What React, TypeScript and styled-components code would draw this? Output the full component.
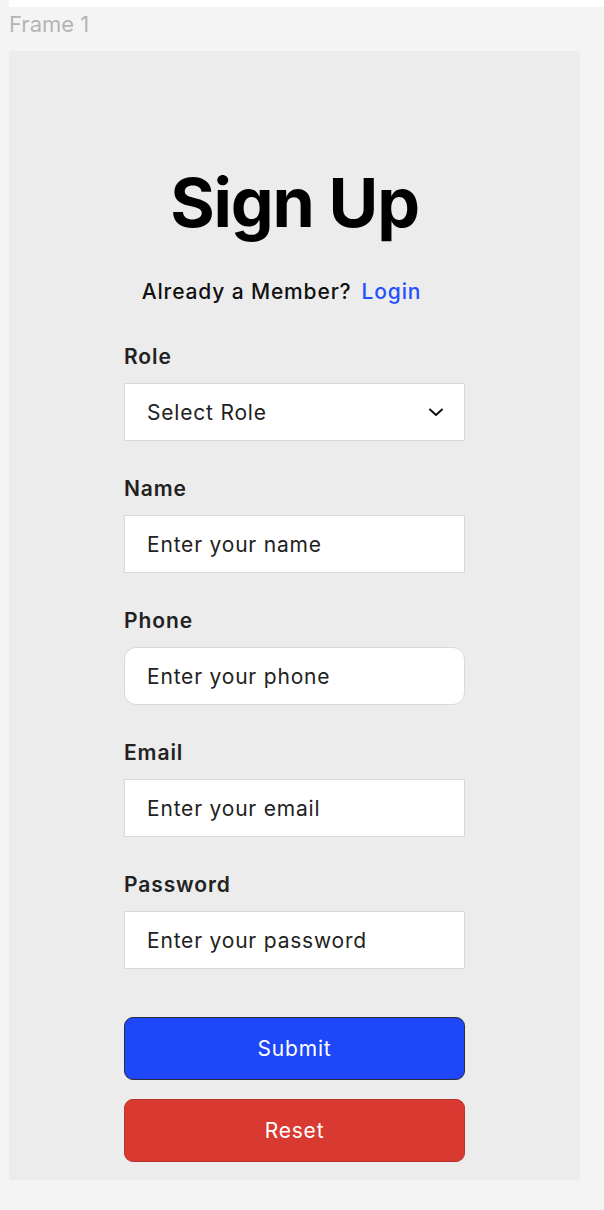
import React from "react";
import styled, { createGlobalStyle } from "styled-components";

const Global = createGlobalStyle`
  html, body { margin: 0; padding: 0; background: #f4f4f4; }
  body { font-family: Inter, "Noto Sans", sans-serif; -webkit-font-smoothing: antialiased; }
  * { box-sizing: border-box; }
`;

const Canvas = styled.div`
  width: 604px;
  height: 1210px;
  background: #f4f4f4;
  overflow: hidden;
`;

const TopStrip = styled.div`
  height: 7px;
  margin-left: 9px;
  background: #ffffff;
`;

const FrameLabel = styled.div`
  margin-left: 9px;
  height: 44px;
  padding-top: 3px;
  font-size: 22px;
  line-height: 28px;
  color: #b4b4b4;
  font-weight: 400;
`;

const Panel = styled.div`
  margin-left: 9px;
  width: 571px;
  height: 1129px;
  background: #ececec;
  padding: 117px 0 0 115px;
`;

const Form = styled.form`
  width: 341px;
  display: flex;
  flex-direction: column;
`;

const Title = styled.h1`
  margin: 0;
  font-size: 68px;
  line-height: 68px;
  font-weight: 700;
  letter-spacing: -1.2px;
  color: #000;
  text-align: center;
`;

const MemberRow = styled.div`
  margin-top: 44px;
  display: flex;
  justify-content: center;
  gap: 10px;
  padding-right: 26px;
  font-size: 21px;
  line-height: 24px;
  font-weight: 500;
  letter-spacing: 0.85px;
  color: #111;
`;

const LoginLink = styled.a`
  color: #2250ff;
  text-decoration: none;
  cursor: pointer;
`;

const Fields = styled.div`
  margin-top: 41px;
  display: flex;
  flex-direction: column;
  gap: 36px;
`;

const Field = styled.label`
  display: flex;
  flex-direction: column;
  gap: 14px;
`;

const LabelText = styled.span`
  font-size: 21px;
  line-height: 24px;
  font-weight: 600;
  letter-spacing: 0.9px;
  color: #222;
`;

const Box = styled.div<{ $rounded?: boolean }>`
  position: relative;
  height: 58px;
  background: #fff;
  border: 1px solid #d9d9d9;
  border-radius: ${(p) => (p.$rounded ? "12px" : "0")};
  display: flex;
  align-items: center;
  padding: 0 20px 0 22px;
`;

const Input = styled.input`
  border: none;
  outline: none;
  background: transparent;
  width: 100%;
  font-family: Inter, "Noto Sans", sans-serif;
  font-size: 21px;
  letter-spacing: 0.8px;
  color: #222;
  padding: 0;
  &::placeholder { color: #222; opacity: 1; }
`;

const SelectText = styled.span`
  flex: 1;
  font-size: 21px;
  letter-spacing: 0.8px;
  color: #222;
`;

const Buttons = styled.div`
  margin-top: 48px;
  display: flex;
  flex-direction: column;
  gap: 19px;
`;

const Button = styled.button<{ $variant: "primary" | "danger" }>`
  height: 63px;
  border-radius: 9px;
  border: 1px solid ${(p) => (p.$variant === "primary" ? "#2b2b3a" : "#b8332c")};
  background: ${(p) => (p.$variant === "primary" ? "#1e47fa" : "#d83a31")};
  color: #fff;
  font-family: Inter, "Noto Sans", sans-serif;
  font-size: 21px;
  font-weight: 400;
  letter-spacing: 0.8px;
  cursor: pointer;
`;

const Chevron = () => (
  <svg width="16" height="16" viewBox="0 0 16 16" fill="none">
    <path d="M2 5.5 L8 11 L14 5.5" stroke="#111" strokeWidth="2" strokeLinecap="round" strokeLinejoin="round" />
  </svg>
);

const fields = [
  { label: "Name", placeholder: "Enter your name" },
  { label: "Phone", placeholder: "Enter your phone", rounded: true },
  { label: "Email", placeholder: "Enter your email" },
  { label: "Password", placeholder: "Enter your password" },
];

export default function App() {
  return (
    <>
      <Global />
      <Canvas>
        <TopStrip />
        <FrameLabel>Frame 1</FrameLabel>
        <Panel>
          <Form onSubmit={(e) => e.preventDefault()}>
            <Title>Sign Up</Title>
            <MemberRow>
              <span>Already a Member?</span>
              <LoginLink>Login</LoginLink>
            </MemberRow>
            <Fields>
              <Field>
                <LabelText>Role</LabelText>
                <Box>
                  <SelectText>Select Role</SelectText>
                  <Chevron />
                </Box>
              </Field>
              {fields.map((f) => (
                <Field key={f.label}>
                  <LabelText>{f.label}</LabelText>
                  <Box $rounded={f.rounded}>
                    <Input placeholder={f.placeholder} type="text" />
                  </Box>
                </Field>
              ))}
            </Fields>
            <Buttons>
              <Button type="submit" $variant="primary">Submit</Button>
              <Button type="reset" $variant="danger">Reset</Button>
            </Buttons>
          </Form>
        </Panel>
      </Canvas>
    </>
  );
}
